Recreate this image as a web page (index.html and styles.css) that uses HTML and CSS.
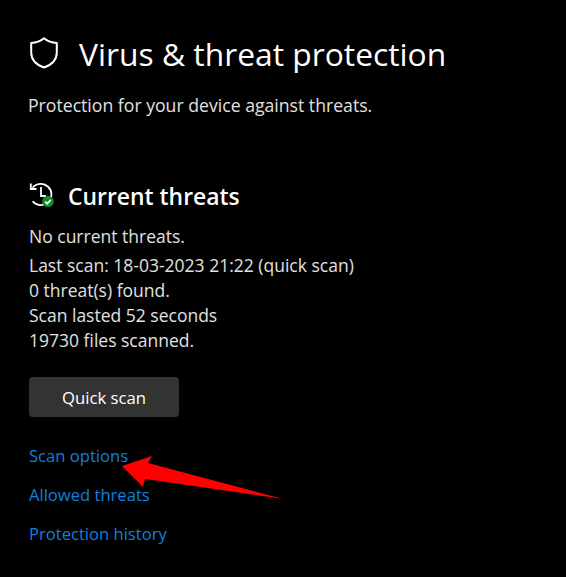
FILE: index.html
```html
<!DOCTYPE html>
<html lang="en">
<head>
<meta charset="utf-8">
<title>Virus &amp; threat protection</title>
<link rel="stylesheet" href="styles.css">
</head>
<body>
<main class="page">
  <header class="title-row">
    <svg class="shield" width="28" height="32" viewBox="0 0 28 32" aria-hidden="true">
      <path d="M14 1.300C10.500 4.300 6 5.800 1.200 6V15.500C1.200 22.500 5.500 27.500 14 30.500C22.500 27.500 26.800 22.500 26.800 15.500V6C22 5.800 17.500 4.300 14 1.300Z" fill="none" stroke="#fff" stroke-width="2" stroke-linejoin="round"/>
    </svg>
    <h1 class="title">Virus &amp; threat protection</h1>
  </header>
  <p class="subtitle">Protection for your device against threats.</p>

  <section class="threats">
    <div class="section-head">
      <svg class="history" width="25" height="25" viewBox="0 0 25 25" aria-hidden="true">
        <path d="M3.600 4.800A10.600 10.600 0 1 1 3.600 18.200" fill="none" stroke="#fff" stroke-width="1.800"/>
        <path d="M1.800 0.500V6H7.500" fill="none" stroke="#fff" stroke-width="1.800"/>
        <path d="M12 4V13H17" fill="none" stroke="#fff" stroke-width="1.800"/>
        <circle cx="19" cy="18.500" r="5.800" fill="#0f8a2c"/>
        <path d="M16.200 18.700L18.200 20.700L21.800 16.800" fill="none" stroke="#fff" stroke-width="1.700"/>
      </svg>
      <h2 class="section-title">Current threats</h2>
    </div>
    <p class="status">No current threats.</p>
    <ul class="details">
      <li>Last scan: 18-03-2023 21:22 (quick scan)</li>
      <li>0 threat(s) found.</li>
      <li>Scan lasted 52 seconds</li>
      <li>19730 files scanned.</li>
    </ul>
    <button class="scan-button" type="button">Quick scan</button>
    <nav class="links">
      <a href="#">Scan options</a>
      <a href="#">Allowed threats</a>
      <a href="#">Protection history</a>
    </nav>
  </section>
</main>
<svg class="arrow" width="566" height="577" viewBox="0 0 566 577" aria-hidden="true">
  <path d="M122 466L152 456L148 463L283 499L145 479L143 487Z" fill="#fe0000"/>
</svg>
</body>
</html>
```
FILE: styles.css
```css
html, body {
  margin: 0;
  padding: 0;
  height: 100%;
  background: #000;
  overflow: hidden;
}

body {
  position: relative;
  color: #fff;
  font-family: "Open Sans", "Noto Sans", sans-serif;
}

.page {
  padding: 35px 0 0 29px;
}

.title-row {
  display: flex;
  align-items: center;
  gap: 21px;
  height: 38px;
}

.shield {
  flex: none;
  margin: -3px 0 0 1px;
}

.title {
  margin: 0;
  font-size: 31.800px;
  font-weight: 400;
  line-height: 38px;
  color: #fff;
}

.subtitle {
  margin: 20px 0 0 -1px;
  font-size: 17.650px;
  line-height: 24px;
  color: #e0e0e0;
}

.threats { margin-top: 65px; }

.section-head {
  display: flex;
  align-items: center;
  gap: 14px;
  height: 30px;
}

.history {
  flex: none;
  margin-top: -3px;
}

.section-title {
  margin: 0;
  font-size: 22.900px;
  font-weight: 600;
  line-height: 30px;
}

.status {
  margin: 12px 0 0;
  font-size: 17.500px;
  line-height: 25px;
  color: #e0e0e0;
}

.details {
  list-style: none;
  margin: 4px 0 0;
  padding: 0;
  font-size: 17.500px;
  line-height: 25px;
  color: #e0e0e0;
}

.scan-button {
  display: block;
  width: 150px;
  height: 40px;
  margin-top: 24px;
  border: 0;
  border-radius: 4px;
  background: #333;
  color: #fff;
  font: inherit;
  font-size: 16.700px;
}

.links {
  display: flex;
  flex-direction: column;
  gap: 14px;
  margin-top: 26px;
}

.links a {
  font-size: 16.600px;
  line-height: 25px;
  color: #0f80de;
  text-decoration: none;
}

.arrow {
  position: absolute;
  left: 0;
  top: 0;
  pointer-events: none;
}
```
